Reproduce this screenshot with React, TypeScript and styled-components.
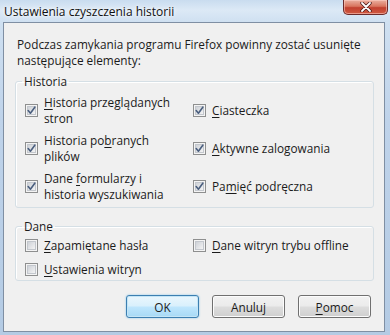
import * as React from "react";
import styled, { createGlobalStyle, css } from "styled-components";

const GlobalStyle = createGlobalStyle`
  html, body {
    margin: 0;
    padding: 0;
    width: 390px;
    height: 335px;
    overflow: hidden;
  }
  body {
    font-family: "Open Sans", "Noto Sans", "Liberation Sans", sans-serif;
    font-size: 11.8px;
    color: #1b1b1b;
  }
`;

const Window = styled.div`
  width: 390px;
  height: 335px;
  box-sizing: border-box;
  display: flex;
  flex-direction: column;
  padding: 0 5px 3px 3px;
  background: linear-gradient(
    180deg,
    #c9dcef 0px,
    #dce9f6 10px,
    #cfe0f1 22px,
    #bfd3ea 120px,
    #b4cbe4 335px
  );
`;

const TitleBar = styled.div`
  height: 22px;
  display: flex;
  align-items: flex-start;
  justify-content: space-between;
`;

const Title = styled.div`
  padding: 4px 0 0 1px;
  font-size: 12px;
  line-height: 16px;
  color: #101010;
  text-shadow: 0 0 6px #ffffff, 0 0 3px #ffffff;
`;

const CloseButton = styled.div`
  width: 45px;
  height: 15px;
  margin-right: -3px;
  box-sizing: border-box;
  border: 1px solid #6b2b2b;
  border-top: none;
  border-radius: 0 0 5px 5px;
  background: linear-gradient(180deg, #eab0a0 0%, #d9755f 45%, #c2402f 55%, #cf5a42 100%);
  box-shadow: inset 0 0 0 1px rgba(255, 210, 200, 0.55);
  display: flex;
  align-items: center;
  justify-content: center;
`;

const Client = styled.div`
  flex: 1;
  box-sizing: border-box;
  border: 1px solid #7f8fa3;
  background: #f0f0f0;
  display: flex;
  flex-direction: column;
  padding: 13px 10px 12px 11px;
`;

const Intro = styled.p`
  margin: 0 0 0 2px;
  line-height: 16px;
`;

const Group = styled.fieldset`
  margin: 3px 0 0 0;
  padding: 0 8px 0 9px;
  border: 1px solid #d5dfe5;
  border-radius: 3px;
  box-shadow: inset 1px 1px 0 #ffffff;
  & + & {
    margin-top: 8px;
  }
`;

const Legend = styled.legend`
  margin-left: -3px;
  padding: 2px 2px 3px 2px;
  line-height: 16px;
  color: #1b1b1b;
`;

const Grid = styled.div<{ $gap: number; $top: number; $bottom: number }>`
  display: grid;
  grid-template-columns: 168px 1fr;
  row-gap: ${(p) => p.$gap}px;
  padding: ${(p) => p.$top}px 0 ${(p) => p.$bottom}px 0;
`;

const Item = styled.label`
  display: flex;
  align-items: center;
  gap: 6px;
  line-height: 16px;
`;

const Key = styled.span`
  text-decoration: underline;
  text-underline-offset: 2px;
`;

const ButtonRow = styled.div`
  margin-top: 14px;
  display: flex;
  justify-content: flex-end;
  gap: 13px;
  padding-right: 3px;
`;

const Button = styled.button<{ $default?: boolean }>`
  width: 73px;
  height: 23px;
  box-sizing: border-box;
  padding: 0;
  font-family: inherit;
  font-size: 11.8px;
  color: #1b1b1b;
  border-radius: 3px;
  border: 1px solid #707070;
  background: linear-gradient(180deg, #f2f2f2 0%, #ebebeb 48%, #dddddd 52%, #cfcfcf 100%);
  box-shadow: inset 0 0 0 1px #fcfcfc;
  ${(p) =>
    p.$default &&
    css`
      border-color: #3c7fb1;
      background: linear-gradient(180deg, #eaf6fd 0%, #d9f0fc 48%, #bee6fd 52%, #a7d9f5 100%);
      box-shadow: inset 0 0 0 1px #c4e5f6, 0 0 2px #7ac1ea;
    `}
`;

const CheckBox: React.FC<{ checked?: boolean }> = ({ checked }) => (
  <svg width="13" height="13" viewBox="0 0 13 13" style={{ flex: "none" }}>
    <defs>
      <linearGradient id="cbIn" x1="0" y1="0" x2="1" y2="1">
        <stop offset="0" stopColor="#cbcfd5" />
        <stop offset="1" stopColor="#f6f6f6" />
      </linearGradient>
    </defs>
    <rect x="0.5" y="0.5" width="12" height="12" fill="#f4f4f4" stroke="#8e8f8f" />
    <rect x="2.5" y="2.5" width="8" height="8" fill="url(#cbIn)" stroke="#c3c7cd" />
    {checked && (
      <path
        d="M3.2 6.6 L5.4 9.2 L9.8 3.2"
        fill="none"
        stroke="#4a5e7e"
        strokeWidth="1.6"
        strokeLinecap="round"
        strokeLinejoin="round"
      />
    )}
  </svg>
);

const CloseGlyph = () => (
  <svg width="12" height="10" viewBox="0 0 12 10">
    <path d="M2 1 L10 9 M10 1 L2 9" stroke="#4a1a1a" strokeWidth="3.4" strokeLinecap="round" />
    <path d="M2 1 L10 9 M10 1 L2 9" stroke="#ffffff" strokeWidth="1.8" strokeLinecap="round" />
  </svg>
);

const App: React.FC = () => {
  return (
    <>
      <GlobalStyle />
      <Window>
        <TitleBar>
          <Title>Ustawienia czyszczenia historii</Title>
          <CloseButton>
            <CloseGlyph />
          </CloseButton>
        </TitleBar>
        <Client>
          <Intro>
            Podczas zamykania programu Firefox powinny zostać usunięte
            <br />
            następujące elementy:
          </Intro>

          <Group>
            <Legend>Historia</Legend>
            <Grid $gap={6} $top={2} $bottom={5}>
              <Item>
                <CheckBox checked />
                <span>
                  <Key>H</Key>istoria przeglądanych
                  <br />
                  stron
                </span>
              </Item>
              <Item>
                <CheckBox checked />
                <span>
                  <Key>C</Key>iasteczka
                </span>
              </Item>
              <Item>
                <CheckBox checked />
                <span>
                  Historia po<Key>b</Key>ranych
                  <br />
                  plików
                </span>
              </Item>
              <Item>
                <CheckBox checked />
                <span>
                  <Key>A</Key>ktywne zalogowania
                </span>
              </Item>
              <Item>
                <CheckBox checked />
                <span>
                  Dane <Key>f</Key>ormularzy i
                  <br />
                  historia wyszukiwania
                </span>
              </Item>
              <Item>
                <CheckBox checked />
                <span>
                  Pa<Key>m</Key>ięć podręczna
                </span>
              </Item>
            </Grid>
          </Group>

          <Group>
            <Legend>Dane</Legend>
            <Grid $gap={8} $top={0} $bottom={3}>
              <Item>
                <CheckBox />
                <span>
                  <Key>Z</Key>apamiętane hasła
                </span>
              </Item>
              <Item>
                <CheckBox />
                <span>
                  <Key>D</Key>ane witryn trybu offline
                </span>
              </Item>
              <Item>
                <CheckBox />
                <span>
                  <Key>U</Key>stawienia witryn
                </span>
              </Item>
            </Grid>
          </Group>

          <ButtonRow>
            <Button $default>OK</Button>
            <Button>Anuluj</Button>
            <Button>
              <Key>P</Key>omoc
            </Button>
          </ButtonRow>
        </Client>
      </Window>
    </>
  );
};

export default App;
